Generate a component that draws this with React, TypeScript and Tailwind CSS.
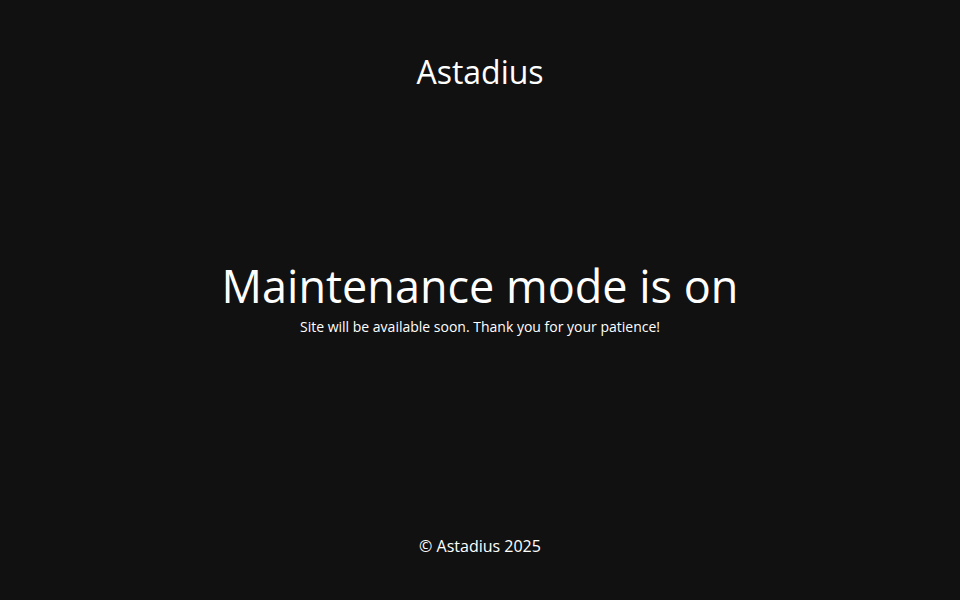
import React from 'react';

const App: React.FC = () => {
    return (
        <div className="min-h-screen h-screen flex flex-col bg-[#111111] text-white font-['Open_Sans',sans-serif] text-center">
            {/* HEADER */}
            <header className="pt-12">
                <h2 className="text-[32px] leading-[48px] font-normal">Astadius</h2>
            </header>

            {/* CONTENIDO */}
            <main className="flex-1 pt-[163px]">
                <h1 className="text-[45px] leading-[54px] font-normal mb-[3px]">Maintenance mode is on</h1>
                <p className="text-[14px] leading-[21px]">Site will be available soon. Thank you for your patience!</p>
            </main>

            {/* FOOTER */}
            <footer className="pb-[42px]">
                <p className="text-[16px] leading-6">© Astadius 2025</p>
            </footer>
        </div>
    );
};

export default App;
